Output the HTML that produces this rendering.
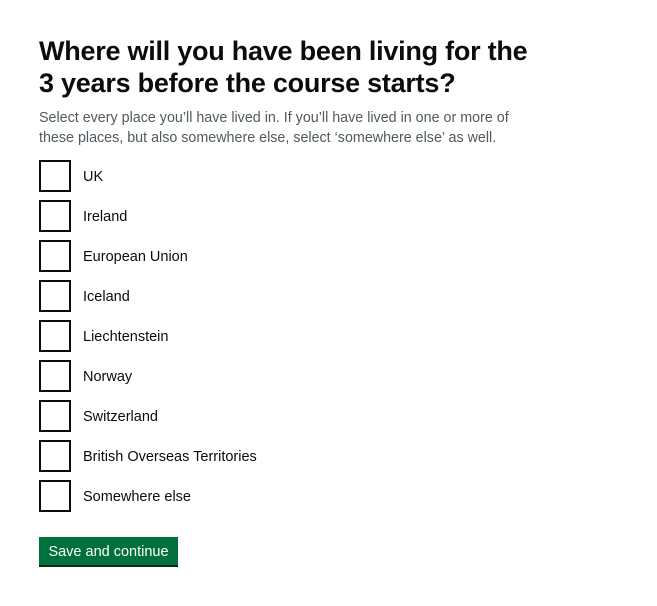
<!DOCTYPE html>
<html><head><meta charset="utf-8"><style>
body{margin:0;background:#fff;font-family:"Liberation Sans",Arial,sans-serif;color:#0b0c0c;width:657px;height:606px;overflow:hidden}
h1{position:absolute;left:39px;top:35px;margin:0;font-size:27px;line-height:32px;font-weight:700;letter-spacing:-0.25px;width:600px}
.hint{position:absolute;left:39px;top:108px;font-size:14.3px;line-height:20px;color:#505a5f;width:600px}
.cb{position:absolute;left:39px;width:28px;height:28px;border:2px solid #0b0c0c}
.lb{position:absolute;left:83px;font-size:14.5px;line-height:20px}
.btn{position:absolute;left:39px;top:537px;width:139px;height:28px;background:#00703c;box-shadow:0 2px 0 #002d18;color:#fff;font-size:14.5px;line-height:31px;text-align:center}
</style></head><body>
<h1>Where will you have been living for the<br>3 years before the course starts?</h1>
<div class="hint">Select every place you’ll have lived in. If you’ll have lived in one or more of<br>these places, but also somewhere else, select ‘somewhere else’ as well.</div>
<div class="cb" style="top:160px"></div><div class="lb" style="top:167px">UK</div>
<div class="cb" style="top:200px"></div><div class="lb" style="top:207px">Ireland</div>
<div class="cb" style="top:240px"></div><div class="lb" style="top:247px">European Union</div>
<div class="cb" style="top:280px"></div><div class="lb" style="top:287px">Iceland</div>
<div class="cb" style="top:320px"></div><div class="lb" style="top:327px">Liechtenstein</div>
<div class="cb" style="top:360px"></div><div class="lb" style="top:367px">Norway</div>
<div class="cb" style="top:400px"></div><div class="lb" style="top:407px">Switzerland</div>
<div class="cb" style="top:440px"></div><div class="lb" style="top:447px">British Overseas Territories</div>
<div class="cb" style="top:480px"></div><div class="lb" style="top:487px">Somewhere else</div>
<div class="btn">Save and continue</div>
</body></html>
